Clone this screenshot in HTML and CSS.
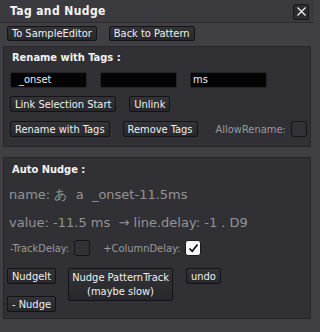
FILE: index.html
```html
<!DOCTYPE html>
<html>
<head>
<meta charset="utf-8">
<link rel="stylesheet" href="styles.css">
</head>
<body>
<div class="window">
  <div class="titlebar">
    <span class="title">Tag and Nudge</span>
    <span class="close"><svg width="11" height="11" viewBox="0 0 11 11"><path d="M1.5 1.5 L9.5 9.5 M9.5 1.5 L1.5 9.5" stroke="#f0f0f0" stroke-width="1.3" fill="none"/></svg></span>
  </div>
  <div class="toprow">
    <span class="btn">To SampleEditor</span>
    <span class="btn">Back to Pattern</span>
  </div>
  <div class="panel p1">
    <div class="heading">Rename with Tags :</div>
    <div class="fields">
      <span class="field f1">_onset</span>
      <span class="field"></span>
      <span class="field">ms</span>
    </div>
    <div class="row r2">
      <span class="btn">Link Selection Start</span>
      <span class="btn">Unlink</span>
    </div>
    <div class="row r3">
      <span class="btn">Rename with Tags</span>
      <span class="btn">Remove Tags</span>
      <span class="label allow">AllowRename:</span>
      <span class="check"></span>
    </div>
  </div>
  <div class="panel p2">
    <div class="heading h2">Auto Nudge :</div>
    <div class="big name">name: あ  a  _onset-11.5ms</div>
    <div class="big value">value: -11.5 ms  → line.delay: -1 . D9</div>
    <div class="checks">
      <span class="label">-TrackDelay:</span>
      <span class="check"></span>
      <span class="label col">+ColumnDelay:</span>
      <span class="check on"><svg width="13" height="12" viewBox="0 0 13 12"><path d="M2.5 6.5 L5.2 9.2 L10.5 2.5" stroke="#000" stroke-width="1.6" fill="none"/></svg></span>
    </div>
    <div class="nudges">
      <div class="stack">
        <span class="btn nb">NudgeIt</span>
        <span class="btn nb">- Nudge</span>
      </div>
      <span class="btn tall">Nudge PatternTrack<br>(maybe slow)</span>
      <span class="btn undo">undo</span>
    </div>
  </div>
</div>
</body>
</html>
```
FILE: styles.css
```css
html, body {
  margin: 0;
  padding: 0;
  background: #404044;
}
body {
  width: 314px;
  height: 332px;
  overflow: hidden;
  font-family: "DejaVu Sans Condensed", "DejaVu Sans", sans-serif;
  font-size: 11px;
  color: #ececec;
}
.window {
  width: 314px;
  height: 332px;
  background: #404044;
}
.titlebar {
  height: 22px;
  background: #3b3b3f;
  border-bottom: 1px solid #2c2c30;
  display: flex;
  align-items: center;
  justify-content: space-between;
  padding: 0 5px 0 10px;
}
.title {
  font-weight: bold;
  font-size: 12px;
  letter-spacing: 0.4px;
  color: #f4f4f4;
}
.close {
  width: 14px;
  height: 14px;
  background: #2c2c30;
  border: 1px solid #18181a;
  border-radius: 2px;
  display: flex;
  align-items: center;
  justify-content: center;
  margin-top: 1px;
}
.toprow {
  display: flex;
  gap: 12px;
  padding: 2px 7px 0;
  height: 15px;
  margin-top: 1px;
}
.btn {
  display: inline-flex;
  align-items: center;
  justify-content: center;
  flex-shrink: 0;
  box-sizing: border-box;
  height: 15px;
  padding: 0 4px;
  background: linear-gradient(#343438, #28282c);
  border: 1px solid #141416;
  border-radius: 2px;
  color: #f0f0f0;
  white-space: nowrap;
  line-height: 1;
}
.panel {
  margin: 0 3px;
  background: #313135;
  border: 1px solid #262629;
  box-sizing: border-box;
}
.p1 {
  margin-top: 5px;
  height: 101px;
  padding: 4px 0 0 6px;
}
.heading {
  font-weight: bold;
  font-size: 11px;
  line-height: 13px;
  padding-left: 2px;
  color: #f4f4f4;
}
.fields {
  display: flex;
  gap: 13px;
  margin-top: 8px;
}
.field {
  box-sizing: border-box;
  width: 77px;
  height: 16px;
  background: #050506;
  border: 1px solid #242427;
  border-radius: 2px;
  padding: 0 2px;
  line-height: 14px;
  color: #f0f0f0;
}
.field.f1 { padding-left: 8px; }
.row {
  display: flex;
  gap: 13px;
  align-items: center;
}
.r2 { margin-top: 8px; }
.r3 { margin-top: 9px; }
.row .btn { height: 16px; }
.label {
  color: #9a9a9e;
  white-space: nowrap;
  flex-shrink: 0;
}
.allow { margin-left: 5px; margin-right: -8px; }
.check {
  box-sizing: border-box;
  flex-shrink: 0;
  width: 16px;
  height: 16px;
  background: #313136;
  border: 1px solid #151517;
  border-radius: 3px;
  display: inline-flex;
  align-items: center;
  justify-content: center;
}
.check.on {
  background: #f6f6f6;
  border-color: #1a1a1a;
}
.p2 {
  margin-top: 10px;
  height: 162px;
  padding: 5px 3px 0;
}
.h2 { padding-left: 5px; }
.big {
  font-family: "DejaVu Sans", sans-serif;
  font-size: 13px;
  color: #939397;
  white-space: pre;
  line-height: 20px;
  padding-left: 2px;
}
.name { margin-top: 9px; }
.value { margin-top: 8px; }
.checks {
  display: flex;
  align-items: center;
  margin-top: 7px;
  padding-left: 3px;
  gap: 5px;
}
.checks .col { margin-left: 8px; }
.nudges {
  display: flex;
  align-items: flex-start;
  margin-top: 12px;
  gap: 12px;
}
.stack {
  display: flex;
  flex-direction: column;
  gap: 12px;
}
.nb { width: 49px; height: 16px; }
.tall {
  width: 105px;
  height: 33px;
  text-align: center;
  line-height: 14px;
}
.undo { height: 16px; margin-left: 1px; }
```
